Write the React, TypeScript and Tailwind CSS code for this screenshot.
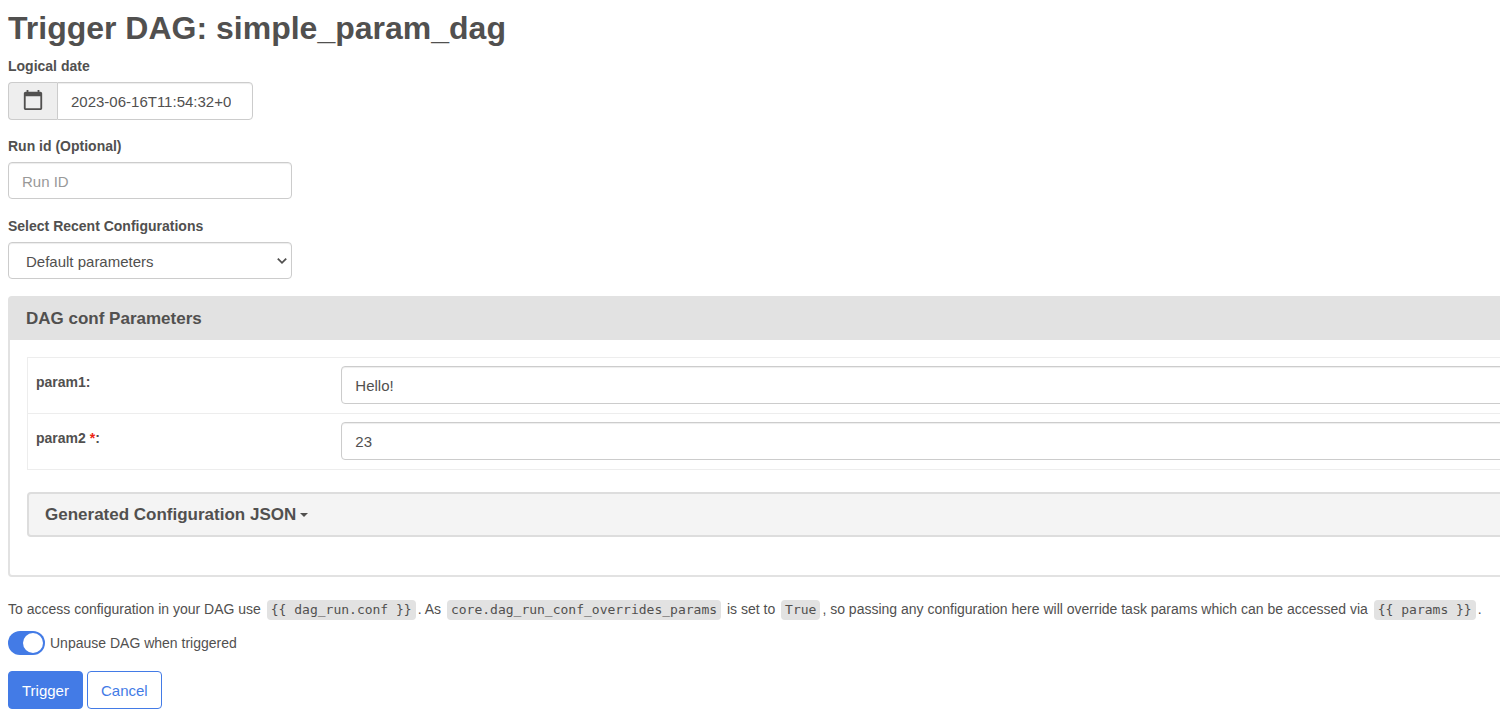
import { useState } from "react";
import type { ReactNode } from "react";

const control =
  "rounded border border-[#ccc] bg-white text-[15px] text-[#51504f] shadow-[inset_0_1px_1px_rgba(0,0,0,0.075)] outline-none focus:border-[#66afe9] placeholder:text-[#999]";

function CalendarIcon() {
  return (
    <svg width="22" height="22" viewBox="0 0 24 24" fill="currentColor" aria-hidden="true">
      <path d="M20 3h-1V1h-2v2H7V1H5v2H4c-1.1 0-2 .9-2 2v16c0 1.1.9 2 2 2h16c1.1 0 2-.9 2-2V5c0-1.1-.9-2-2-2zm0 18H4V8h16v13z" />
    </svg>
  );
}

function Code({ children }: { children: ReactNode }) {
  return (
    <code className="mx-0.5 inline-block whitespace-pre rounded bg-[#e2e2e2] px-1 font-['DejaVu_Sans_Mono',monospace] text-[13px] leading-5">
      {children}
    </code>
  );
}

function Field({ id, label, children }: { id: string; label: string; children: ReactNode }) {
  return (
    <div className="flex min-h-20 flex-col items-start gap-1.5">
      <label htmlFor={id} className="text-sm leading-5 font-bold">
        {label}
      </label>
      {children}
    </div>
  );
}

function ParamRow({ id, required, initial }: { id: string; required?: boolean; initial: string }) {
  const [value, setValue] = useState(initial);
  return (
    <tr className="border border-[#ededed]">
      <th scope="row" className="w-1/5 px-2 pt-3.5 text-left align-top text-sm leading-5 font-bold">
        <label htmlFor={id}>
          {id}
          {required ? <span className="text-[#ee2211]"> *</span> : null}:
        </label>
      </th>
      <td className="px-2 pt-2 pb-[9px]">
        <input
          id={id}
          value={value}
          onChange={(e) => setValue(e.target.value)}
          className={`${control} block h-[38px] w-full px-[13px]`}
        />
      </td>
    </tr>
  );
}

export default function App() {
  const [date, setDate] = useState("2023-06-16T11:54:32+00:00");
  const [showJson, setShowJson] = useState(false);

  return (
    <div className="overflow-x-clip bg-white pl-2 font-['Liberation_Sans',Arial,sans-serif] text-sm leading-5 text-[#51504f]">
      <form onSubmit={(e) => e.preventDefault()}>
        <h1 className="pt-2 pb-2 text-[32px] leading-10 font-bold">Trigger DAG: simple_param_dag</h1>

        <Field id="logical-date" label="Logical date">
          <div className="flex h-[38px]">
            <span className="flex w-[49px] items-center justify-center rounded-l border border-r-0 border-[#ccc] bg-[#eee] pb-0.5">
              <CalendarIcon />
            </span>
            <span className="flex w-[196px] rounded-r border border-[#ccc] bg-white pt-0.5 pr-[21px] pl-[13px] shadow-[inset_0_1px_1px_rgba(0,0,0,0.075)]">
              <input
                id="logical-date"
                value={date}
                onChange={(e) => setDate(e.target.value)}
                className="w-full min-w-0 bg-transparent text-[15px] outline-none"
              />
            </span>
          </div>
        </Field>

        <Field id="run-id" label="Run id (Optional)">
          <input id="run-id" placeholder="Run ID" className={`${control} h-[37px] w-[284px] px-[13px] pt-0.5`} />
        </Field>

        <Field id="recent-configs" label="Select Recent Configurations">
          <div className="grid w-[284px] items-center">
            <select
              id="recent-configs"
              className={`${control} col-start-1 row-start-1 h-[37px] w-full appearance-none px-[17px] pt-0.5`}
            >
              <option>Default parameters</option>
            </select>
            <svg
              className="pointer-events-none col-start-1 row-start-1 mr-1 justify-self-end"
              width="12"
              height="8"
              viewBox="0 0 12 8"
              fill="none"
              stroke="currentColor"
              strokeWidth="1.8"
              aria-hidden="true"
            >
              <path d="M1.8 1.6 6 5.8l4.2-4.2" />
            </svg>
          </div>
        </Field>

        <section className="-mr-[76px] rounded border-2 border-[#e2e2e2]">
          <h2 className="bg-[#e2e2e2] px-4 py-2.5 text-[17px] leading-[22px] font-bold">
            DAG conf Parameters
          </h2>
          <div className="px-[17px] pt-[17px] pb-[38px]">
            <table className="w-full border-collapse">
              <tbody>
                <ParamRow id="param1" initial="Hello!" />
                <ParamRow id="param2" initial="23" required />
              </tbody>
            </table>
            <div className="mt-[22px] rounded border-2 border-[#ddd] bg-[#f4f4f4]">
              <button
                type="button"
                aria-expanded={showJson}
                onClick={() => setShowJson(!showJson)}
                className="flex w-full items-center gap-1 px-4 pt-2.5 pb-[9px] text-left text-[17px] leading-[22px] font-bold"
              >
                Generated Configuration JSON
                <svg width="8" height="4" viewBox="0 0 8 4" fill="currentColor" aria-hidden="true">
                  <path d="M0 0h8L4 4z" />
                </svg>
              </button>
              {showJson ? (
                <pre className="border-t border-[#ddd] bg-white p-4 text-[13px]">
                  {JSON.stringify({ param1: "Hello!", param2: 23 }, null, 4)}
                </pre>
              ) : null}
            </div>
          </div>
        </section>

        <p className="pt-[22px]">
          To access configuration in your DAG use <Code>{"{{ dag_run.conf }}"}</Code>. As{" "}
          <Code>core.dag_run_conf_overrides_params</Code> is set to <Code>True</Code>, so passing any configuration
          here will override task params which can be accessed via <Code>{"{{ params }}"}</Code>.
        </p>

        <label className="mt-[11px] flex w-fit items-center gap-[5px]">
          <input
            type="checkbox"
            defaultChecked
            className="flex h-6 w-[37px] cursor-pointer appearance-none items-center rounded-full bg-[#ccc] p-0.5 before:size-5 before:rounded-full before:bg-white checked:justify-end checked:bg-[#437be6]"
          />
          Unpause DAG when triggered
        </label>

        <div className="mt-4 flex gap-1 pb-4">
          <button
            type="submit"
            className="h-[38px] rounded border border-[#437be6] bg-[#437be6] px-[13px] pt-0.5 text-[15px] text-white"
          >
            Trigger
          </button>
          <a
            href="#"
            className="flex h-[38px] items-center rounded border border-[#437be6] bg-white px-[13px] pt-0.5 text-[15px] text-[#437be6]"
          >
            Cancel
          </a>
        </div>
      </form>
    </div>
  );
}
